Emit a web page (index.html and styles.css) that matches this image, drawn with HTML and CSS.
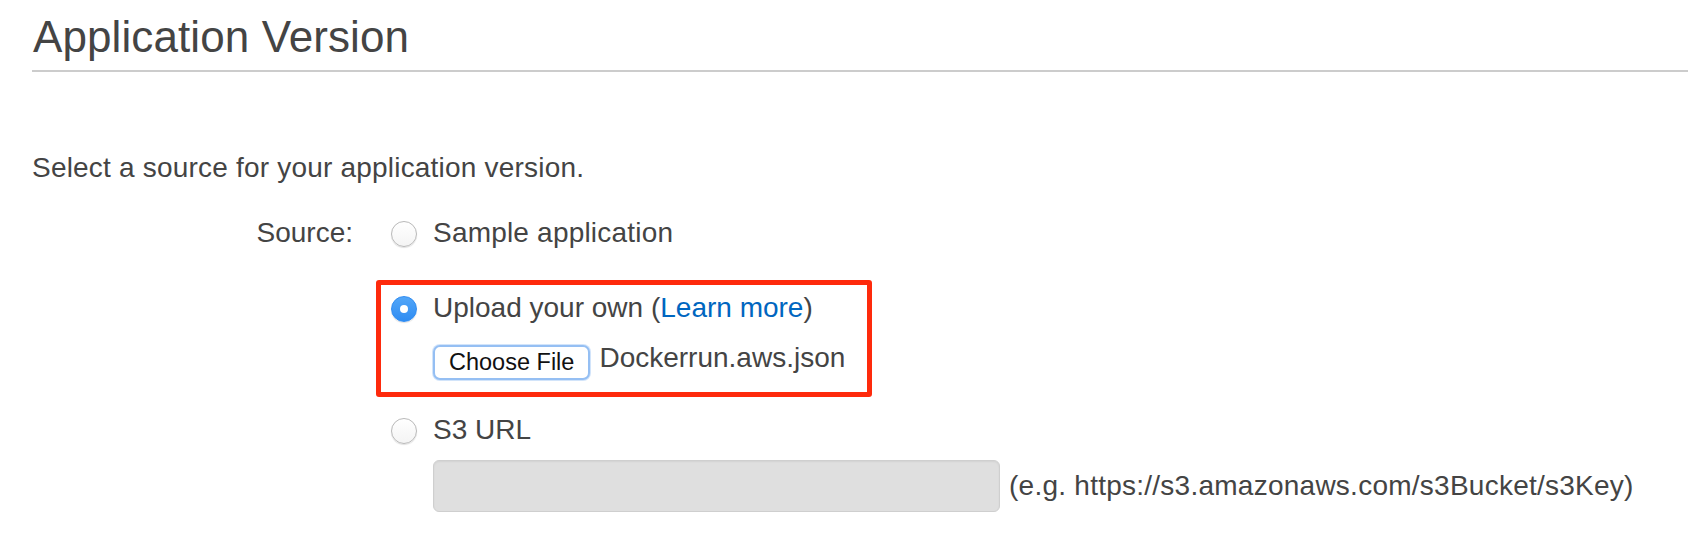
FILE: index.html
```html
<!DOCTYPE html>
<html lang="en">
<head>
<meta charset="utf-8">
<title>Application Version</title>
<link rel="stylesheet" href="styles.css">
</head>
<body>
<div class="page">
  <h1 class="title">Application Version</h1>
  <p class="intro">Select a source for your application version.</p>
  <div class="field">
    <div class="field-label">Source:</div>
    <div class="options">
      <label class="option"><input type="radio" name="source" class="radio"><span class="wide">Sample application</span></label>
      <div class="option-box">
        <label class="option"><input type="radio" name="source" class="radio" checked><span>Upload your own (<a class="link" href="#">Learn more</a>)</span></label>
        <div class="sub file-row"><button type="button" class="file-btn">Choose File</button><span class="file-name">Dockerrun.aws.json</span></div>
      </div>
      <label class="option option-s3"><input type="radio" name="source" class="radio"><span>S3 URL</span></label>
      <div class="sub url-row"><input type="text" class="url-input" disabled><span class="hint">(e.g. https://s3.amazonaws.com/s3Bucket/s3Key)</span></div>
    </div>
  </div>
</div>
</body>
</html>
```
FILE: styles.css
```css
html, body {
  margin: 0;
  padding: 0;
  background: #ffffff;
}

body {
  font-family: "Liberation Sans", Arial, Helvetica, sans-serif;
  color: #444444;
}

.page {
  padding: 7px 0 0 32px;
}

.title {
  margin: 0;
  font-size: 44px;
  font-weight: normal;
  line-height: 60px;
  padding: 0 0 3px 1px;
  border-bottom: 2px solid #cccccc;
  color: #444444;
  letter-spacing: 0.1px;
}

.intro {
  margin: 76px 0 0 0;
  font-size: 28px;
  line-height: 40px;
  letter-spacing: 0.2px;
}

.field {
  display: grid;
  grid-template-columns: 321px auto;
  column-gap: 38px;
  margin-top: 25px;
  font-size: 28px;
  line-height: 40px;
}

.field-label {
  text-align: right;
}

.options {
  display: flex;
  flex-direction: column;
  align-items: flex-start;
}

.option {
  display: flex;
  align-items: center;
  gap: 16px;
  height: 40px;
  cursor: pointer;
}

.wide {
  letter-spacing: 0.2px;
}

.radio {
  appearance: none;
  -webkit-appearance: none;
  margin: 2px 0 0 0;
  width: 26px;
  height: 26px;
  border-radius: 50%;
  border: 1px solid #b9b9b9;
  background: linear-gradient(#ffffff, #f4f4f4);
  box-shadow: 0 1px 1px rgba(0, 0, 0, 0.12);
  box-sizing: border-box;
  flex: none;
  position: relative;
}

.radio:checked {
  border-color: #2f8cf2;
  background: linear-gradient(#52a6f8, #2f8cf2);
}

.radio:checked::after {
  content: "";
  position: absolute;
  left: 50%;
  top: 50%;
  width: 8px;
  height: 8px;
  margin: -4px 0 0 -4px;
  border-radius: 50%;
  background: #ffffff;
}

.link {
  color: #0066c0;
  text-decoration: none;
}

.option-box {
  margin: 27px 0 0 -15px;
  padding: 3px 22px 12px 10px;
  border: 5px solid #fe2a0c;
  border-radius: 3px;
}

.sub {
  display: flex;
  align-items: center;
  padding-left: 42px;
}

.file-row {
  margin-top: 17px;
  gap: 9px;
}

.file-btn {
  height: 35px;
  box-sizing: border-box;
  padding: 0 14px;
  font-family: "Liberation Sans", Arial, Helvetica, sans-serif;
  font-size: 23.5px;
  line-height: 31px;
  color: #111111;
  background: #ffffff;
  border: 2px solid #95bff3;
  border-radius: 7px;
  box-shadow: 0 0 0 1px #d2e4fa;
}

.file-name {
  align-self: flex-start;
  line-height: 25px;
  color: #444444;
}

.option-s3 {
  margin-top: 13px;
}

.url-row {
  margin-top: 10px;
  gap: 9px;
}

.url-input {
  width: 567px;
  height: 52px;
  box-sizing: border-box;
  margin: 0;
  background: #dfdfdf;
  border: 1px solid #cfcfcf;
  border-radius: 6px;
  box-shadow: inset 0 1px 2px rgba(0, 0, 0, 0.06);
}

.hint {
  font-size: 28px;
  color: #444444;
  letter-spacing: 0.25px;
}
```
